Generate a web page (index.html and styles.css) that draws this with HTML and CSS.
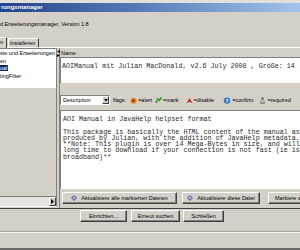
FILE: index.html
```html
<!DOCTYPE html>
<html>
<head>
<meta charset="utf-8">
<link rel="stylesheet" href="styles.css">
</head>
<body>
<div class="topstrip"></div>
<div class="titlebar">rungsmanager</div>
<div class="version">d Erweiterungsmanager, Version 1.8</div>
<div class="tabs">
  <div class="tab tab-sel">n</div>
  <div class="tab">Installeren</div>
</div>
<div class="tabpanel">
  <div class="left">
    <div class="tree">
      <div class="row">ste und Erweiterungen</div>
      <div class="row">en</div>
      <div class="row"><span class="hl">ual</span></div>
      <div class="row">tingFilter</div>
    </div>
    <div class="fill"></div>
    <div class="hscroll">
      <div class="track"></div>
      <div class="arrowbtn"><svg width="3" height="5" viewBox="0 0 3 5"><path d="M0 0L3 2.5L0 5Z" fill="#000"/></svg></div>
    </div>
  </div>
  <div class="divider">
    <svg width="3" height="7" viewBox="0 0 3 7"><path d="M3 0L0 1.5L3 3Z" fill="#000"/><path d="M0 4L3 5.5L0 7Z" fill="#000"/></svg>
  </div>
  <div class="right">
    <div class="label">Name:</div>
    <div class="namebox">AOIManual mit Julian MacDonald, v2.6 July 2008 , Größe: 14</div>
    <div class="flags">
      <div class="combo"><span class="combo-text">Description</span><span class="combo-btn"><svg width="4" height="3" viewBox="0 0 4 3"><path d="M0 0H4L2 2.5Z" fill="#000"/></svg></span></div>
      <span class="flags-label">flags:</span>
      <span class="flag f-alert"><svg width="7" height="7" viewBox="0 0 7 7"><circle cx="3.5" cy="3.8" r="3" fill="#f08020"/><rect x="2.4" y="2.6" width="2.2" height="2.4" fill="#7a2a00"/></svg>=alert</span>
      <span class="flag f-mark"><svg width="7" height="7" viewBox="0 0 7 7"><path d="M1 6L3 2L4.5 3.5L6.5 0.5" stroke="#2a8a20" stroke-width="1.4" fill="none"/><circle cx="2.5" cy="2" r="1.3" fill="#60c040"/></svg>=mark</span>
      <span class="flag f-disable"><svg width="7" height="7" viewBox="0 0 7 7"><path d="M0.5 6.5L3.5 1L6.5 6.5L3.5 4.8Z" fill="#d02020"/></svg>=disable</span>
      <span class="flag f-confirm"><svg width="8" height="7" viewBox="0 0 8 7"><circle cx="4" cy="3.6" r="3.2" fill="#2a78d0"/><text x="4" y="5.6" font-size="5" font-family="Liberation Sans" font-weight="bold" fill="#fff" text-anchor="middle">?</text></svg>=confirm</span>
      <span class="flag f-required"><svg width="7" height="7" viewBox="0 0 7 7"><circle cx="3.5" cy="1.6" r="1.4" fill="#707070"/><path d="M1 7L1.6 3.5H5.4L6 7Z" fill="#8a8a8a"/><rect x="2.6" y="4" width="1.8" height="1.6" fill="#d8d8d8"/></svg>=required</span>
    </div>
    <div class="desc">AOI Manual in JavaHelp helpset format

This package is basically the HTML content of the manual as
produced by Julian, with the addition of JavaHelp metadata.
**Note: This plugin is over 14 Mega-Bytes in size, and will take a
long time to download if your connection is not fast (ie is not
broadband)**</div>
    <div class="btnrow">
      <div class="btn b1"><svg class="bicon" width="6" height="6" viewBox="0 0 6 6"><path d="M3 0L6 3L3 6L0 3Z" fill="#6a6ab8"/><circle cx="3" cy="3" r="1" fill="#d8d8f0"/></svg>Aktualisiere alle markierten Dateien</div>
      <div class="btn b2"><svg class="bicon" width="6" height="6" viewBox="0 0 6 6"><path d="M3 0L6 3L3 6L0 3Z" fill="#6a6ab8"/><circle cx="3" cy="3" r="1" fill="#d8d8f0"/></svg>Aktualisiere diese Datei</div>
      <div class="btn b3">Markiere alle</div>
    </div>
  </div>
</div>
<div class="bottombar">
  <div class="btn bb1">Einrichten...</div>
  <div class="btn bb2">Erneut suchen</div>
  <div class="btn bb3">Schließen</div>
</div>
<div class="status"></div>
</body>
</html>
```

FILE: styles.css
```css
* { box-sizing: border-box; }
html, body { margin: 0; padding: 0; }
body {
  width: 300px;
  height: 250px;
  overflow: hidden;
  background: #d4d0c8;
  font-family: "Liberation Sans", Arial, sans-serif;
  font-size: 5.5px;
  color: #000;
}
.topstrip { height: 3px; background: #e2e0da; }
.titlebar {
  height: 9px;
  background: linear-gradient(90deg, #22448a 0%, #5878b4 45%, #a2c4ec 100%);
  color: #fff;
  font-weight: bold;
  font-size: 6px;
  line-height: 9px;
  padding-left: 1px;
  white-space: nowrap;
}
.version {
  height: 26px;
  padding-top: 9px;
  line-height: 7px;
  white-space: nowrap;
}
.tabs {
  display: flex;
  align-items: flex-end;
  height: 9px;
  position: relative;
  z-index: 1;
}
.tab {
  height: 9px;
  line-height: 8px;
  padding: 0 1px;
  margin-left: 1px;
  border-top: 1px solid #fff;
  border-left: 1px solid #fff;
  border-right: 1px solid #404040;
  white-space: nowrap;
  width: 31px;
}
.tab-sel {
  width: 7px;
  height: 11px;
  margin: 0 0 -1px 0;
  border-left: none;
  padding-left: 0;
  line-height: 9px;
  background: #d4d0c8;
}
.tabpanel {
  height: 162px;
  border-top: 1px solid #fff;
  border-bottom: 1px solid #404040;
  display: flex;
}
.left {
  width: 57px;
  display: flex;
  flex-direction: column;
  border-top: 1px solid #808080;
  border-right: 1px solid #808080;
  border-bottom: 1px solid #fff;
  margin-bottom: 1px;
}
.tree {
  background: #fff;
  height: 39px;
  padding-top: 1px;
}
.row {
  height: 7.5px;
  line-height: 7.5px;
  white-space: nowrap;
  overflow: hidden;
}
.hl { background: #0a246a; color: #fff; padding: 0 1px 0 0; }
.fill { flex: 1; }
.hscroll {
  height: 10px;
  display: flex;
  border-top: 1px solid #808080;
}
.track { flex: 1; background: #e6e3de; }
.arrowbtn {
  width: 7px;
  border: 1px solid;
  border-color: #fff #404040 #404040 #fff;
  display: flex;
  align-items: center;
  justify-content: center;
  background: #d4d0c8;
}
.divider {
  width: 3px;
  padding-top: 2px;
  border-right: 1px solid #808080;
}
.divider svg { display: block; }
.right {
  flex: 1;
  display: flex;
  flex-direction: column;
  min-width: 0;
}
.label {
  height: 9px;
  padding: 2px 0 0 1px;
  line-height: 7px;
}
.namebox {
  height: 26px;
  background: #fff;
  border-top: 1px solid #808080;
  border-left: 1px solid #808080;
  padding: 5px 0 0 1px;
  font-family: "Liberation Mono", "Courier New", monospace;
  font-size: 6.7px;
  line-height: 6.4px;
  color: #2a2a2a;
  white-space: pre;
  overflow: hidden;
}
.flags {
  height: 10px;
  margin-top: 12px;
  display: flex;
  align-items: center;
  white-space: nowrap;
}
.combo {
  width: 50px;
  height: 10px;
  background: #fff;
  border: 1px solid;
  border-color: #808080 #fff #fff #808080;
  display: flex;
  align-items: center;
}
.combo-text { flex: 1; padding-left: 2px; }
.combo-btn {
  width: 7px;
  height: 8px;
  background: #d4d0c8;
  border: 1px solid;
  border-color: #fff #404040 #404040 #fff;
  display: flex;
  align-items: center;
  justify-content: center;
}
.flags-label { margin-left: 3px; }
.flag { display: inline-flex; align-items: center; }
.flag svg { margin-right: 1px; }
.f-alert { margin-left: 4px; }
.f-mark { margin-left: 3px; }
.f-disable { margin-left: 7px; }
.f-confirm { margin-left: 9px; }
.f-required { margin-left: 6px; }
.desc {
  height: 79px;
  margin-top: 5px;
  background: #fff;
  border-top: 1px solid #808080;
  border-left: 1px solid #808080;
  padding: 5px 0 0 2px;
  font-family: "Liberation Mono", "Courier New", monospace;
  font-size: 6.7px;
  line-height: 6.3px;
  color: #2a2a2a;
  white-space: pre;
  overflow: hidden;
}
.btnrow {
  height: 12px;
  margin-top: 3px;
  display: flex;
}
.btn {
  height: 12px;
  background: #d4d0c8;
  border: 1px solid;
  border-color: #fff #404040 #404040 #fff;
  box-shadow: inset -1px -1px 0 #808080;
  display: flex;
  align-items: center;
  justify-content: center;
  white-space: nowrap;
  flex: none;
}
.bicon { margin-right: 4px; }
.b1 { width: 115px; margin-left: 2px; }
.b2 { width: 78px; margin-left: 5px; }
.b3 { width: 60px; margin-left: 8px; justify-content: flex-start; padding-left: 6px; }
.bottombar {
  height: 22px;
  padding-top: 1px;
  display: flex;
  justify-content: center;
  padding-left: 4px;
}
.bb1 { width: 47px; }
.bb2 { width: 49px; margin-left: 4px; }
.bb3 { width: 41px; margin-left: 3px; }
.status {
  height: 19px;
  border-top: 1px solid #a8a49c;
  box-shadow: inset 0 1px 0 #f4f2ee;
  border-bottom: 2px solid #6a6862;
}
```
